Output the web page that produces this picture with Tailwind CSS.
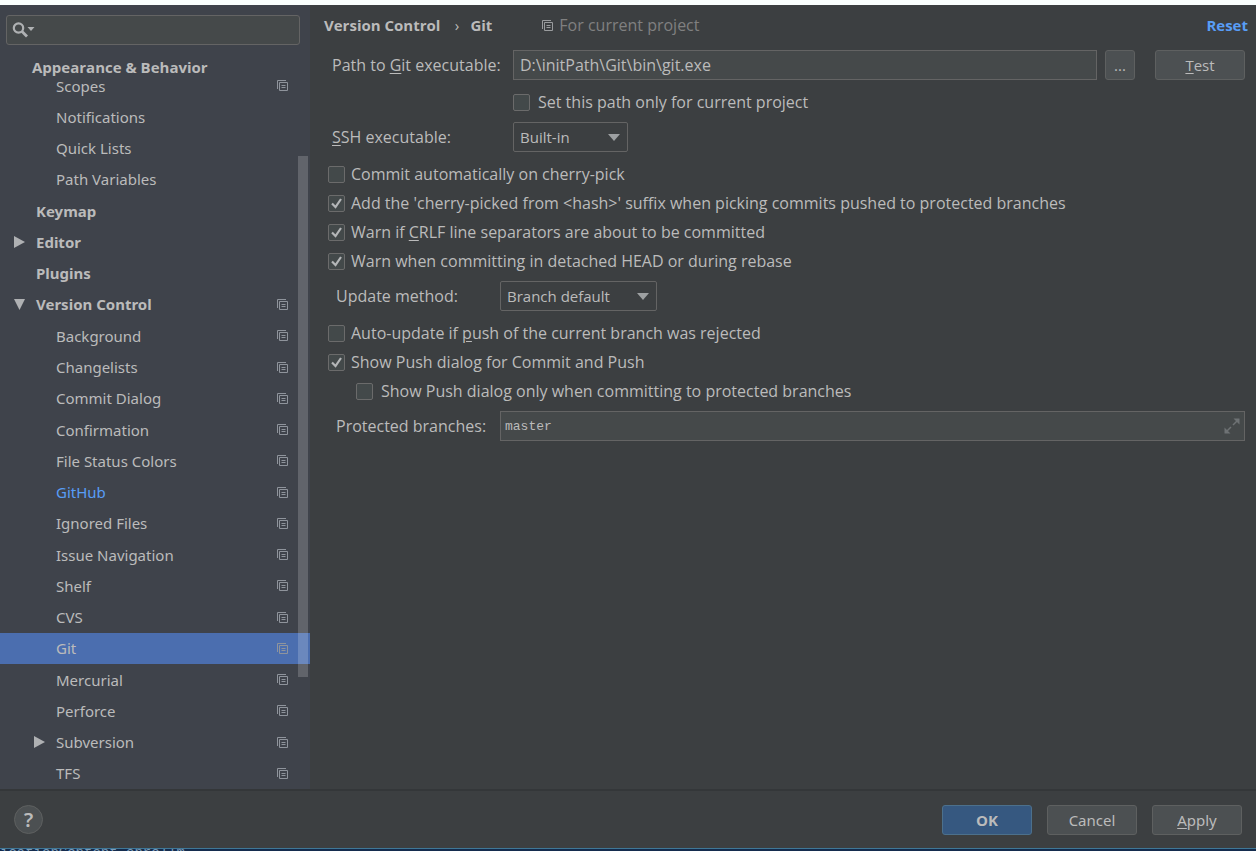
<!DOCTYPE html>
<html lang="en">
<head>
<meta charset="utf-8">
<meta name="viewport" content="width=device-width, initial-scale=1">
<title>Settings - Git</title>
<script src="https://cdn.jsdelivr.net/npm/@tailwindcss/browser@4"></script>
</head>
<body class="bg-[#3c3f41] font-['Noto_Sans','Open_Sans',sans-serif] text-[15px] leading-5 text-[#bbbbbb]">
<svg class="hidden">
  <symbol id="copy" viewBox="0 0 11 11"><path d="M.5 9V.5H9M2.500 2.500H10.500V10.500H2.500ZM4.500 5.500H8.500M4.500 7.500H8.500" fill="none" stroke="currentColor"/></symbol>
  <symbol id="right" viewBox="0 0 11 12"><path d="M0 0L11 6L0 12Z" fill="currentColor"/></symbol>
  <symbol id="down" viewBox="0 0 12 11"><path d="M0 0H11L5.500 11Z" fill="currentColor"/></symbol>
</svg>
<div class="flex min-h-screen flex-col border-t-[5px] border-[#fafffe]">
  <div class="flex flex-1">
    <aside class="relative flex w-[310px] shrink-0 flex-col bg-[#3f434b]">
      <label class="mx-[6px] mr-[10px] mt-[10px] flex h-[30px] items-center rounded-[3px] border border-[#646464] bg-[#45494a] pl-[5px]">
        <svg class="h-4 w-[24px] shrink-0" viewBox="0 0 24 16"><circle cx="6.500" cy="6" r="4.700" fill="none" stroke="#afb1b3" stroke-width="2.200"/><path d="M9.800 9.300L15 14.500" stroke="#afb1b3" stroke-width="2.800"/><path d="M15.500 5H22.500L19 9Z" fill="#afb1b3"/></svg>
        <input type="search" aria-label="Search settings" class="min-w-0 flex-1 bg-transparent outline-none">
      </label>
      <h2 class="mt-3 pl-8 font-['Open_Sans',sans-serif] font-bold">Appearance &amp; Behavior</h2>
      <nav id="tree" class="-mt-[7px] flex flex-1 flex-col" aria-label="Settings"></nav>
      <div class="absolute right-[2px] top-[151px] h-[521px] w-[10px] bg-white/18"></div>
    </aside>
    <main class="min-w-0 flex-1 pb-4 font-['Open_Sans',sans-serif] text-[16px]">
      <header class="flex h-10 items-center pl-[14px] pr-2">
        <h1 class="flex text-[15px] font-bold"><span>Version Control</span><span class="w-[30px] pl-[3px] text-center font-normal">›</span><span>Git</span></h1>
        <svg class="ml-[50px] mr-[6px] h-[11px] w-[11px] text-[#9a9c9e]"><use href="#copy"/></svg>
        <span class="text-[#808080]">For current project</span>
        <a href="#" class="ml-auto text-[15px] font-bold text-[#589df6]">Reset</a>
      </header>
      <div class="mt-[5px] flex h-[30px] items-center pl-[22px] pr-[11px]">
        <label for="path" class="w-[181px] shrink-0">Path to <u class="underline-offset-2">G</u>it executable:</label>
        <input id="path" value="D:\initPath\Git\bin\git.exe" class="h-[30px] min-w-0 flex-1 border border-[#646464] bg-[#45494a] px-[6px] outline-none">
        <button class="ml-2 h-[30px] w-[30px] rounded-[3px] border border-[#5e6060] bg-[#4c5052] text-[15px]">...</button>
        <button class="ml-5 h-[30px] w-[90px] rounded-[3px] border border-[#5e6060] bg-[#4c5052] text-[15px]"><u class="underline-offset-2">T</u>est</button>
      </div>
      <label class="mt-3 flex h-5 items-center gap-2 pl-[203px]"><input type="checkbox" class="box">Set this path only for current project</label>
      <div class="mt-[10px] flex items-center pl-[22px]">
        <label for="ssh" class="w-[181px]"><u class="underline-offset-2">S</u>SH executable:</label>
        <span class="relative w-[115px]"><select id="ssh" class="h-[30px] w-full appearance-none rounded-[2px] border border-[#646464] bg-[#3c3f41] px-[6px] text-[15px]"><option>Built-in</option></select><svg class="pointer-events-none absolute right-2 top-3 h-[7px] w-[12px]" viewBox="0 0 12 7"><path d="M0 0H12L6 7Z" fill="#9da0a2"/></svg></span>
      </div>
      <div class="mt-3 flex flex-col gap-[9px] pl-[18px]">
        <label class="flex h-5 items-center gap-[6px]"><input type="checkbox" class="box">Commit automatically on cherry-pick</label>
        <label class="flex h-5 items-center gap-[6px]"><input type="checkbox" checked class="box">Add the 'cherry-picked from &lt;hash&gt;' suffix when picking commits pushed to protected branches</label>
        <label class="flex h-5 items-center gap-[6px]"><input type="checkbox" checked class="box"><span>Warn if <u class="underline-offset-2">C</u>RLF line separators are about to be committed</span></label>
        <label class="flex h-5 items-center gap-[6px]"><input type="checkbox" checked class="box">Warn when committing in detached HEAD or during rebase</label>
      </div>
      <div class="mt-[10px] flex items-center pl-[26px]">
        <label for="update" class="w-[164px]">Update method:</label>
        <span class="relative w-[157px]"><select id="update" class="h-[30px] w-full appearance-none rounded-[2px] border border-[#646464] bg-[#3c3f41] px-[6px] text-[15px]"><option>Branch default</option></select><svg class="pointer-events-none absolute right-2 top-3 h-[7px] w-[12px]" viewBox="0 0 12 7"><path d="M0 0H12L6 7Z" fill="#9da0a2"/></svg></span>
      </div>
      <div class="mt-3 flex flex-col gap-[9px] pl-[18px]">
        <label class="flex h-5 items-center gap-[6px]"><input type="checkbox" class="box"><span>Auto-update if <u class="underline-offset-2">p</u>ush of the current branch was rejected</span></label>
        <label class="flex h-5 items-center gap-[6px]"><input type="checkbox" checked class="box">Show Push dialog for Commit and Push</label>
        <label class="ml-7 flex h-5 items-center gap-2"><input type="checkbox" class="box">Show Push dialog only when committing to protected branches</label>
      </div>
      <div class="mt-[10px] flex items-center pl-[26px] pr-[11px]">
        <label for="branches" class="w-[164px] shrink-0">Protected branches:</label>
        <span class="relative min-w-0 flex-1"><input id="branches" value="master" class="block h-[30px] w-full border border-[#646464] bg-[#45494a] px-1 font-['Liberation_Mono',monospace] text-[13px] outline-none"><svg class="absolute right-[5px] top-[7px] h-4 w-4" viewBox="0 0 16 16"><path d="M9.500 .5H15.500V6.500ZM.5 9.500V15.500H6.500Z" fill="#6e7274"/><path d="M9 7L13 3M3 13L7 9" stroke="#6e7274" stroke-width="1.500"/></svg></span>
      </div>
    </main>
  </div>
  <footer class="flex h-[59px] items-center gap-[15px] border-t-2 border-[#343739] pl-[14px] pr-[14px]">
    <button aria-label="Help" class="mr-auto h-[29px] w-[29px] rounded-full border border-[#5e6060] bg-[#4c5052] text-[20px] font-semibold">?</button>
    <button class="h-[30px] w-[90px] rounded-[3px] border border-[#4c708c] bg-[#365880] font-['Open_Sans',sans-serif] font-bold">OK</button>
    <button class="h-[30px] w-[90px] rounded-[3px] border border-[#5e6060] bg-[#4c5052]">Cancel</button>
    <button class="h-[30px] w-[90px] rounded-[3px] border border-[#5e6060] bg-[#4c5052]"><u class="underline-offset-2">A</u>pply</button>
  </footer>
  <div class="h-[3px] overflow-hidden border-t border-[#3f7796] bg-[#142c4e]"><p class="-mt-1 font-['Liberation_Mono',monospace] text-[14px] leading-4 text-[#7d9dba]">icationContent enrollm</p></div>
</div>
<script>
// Each entry: label, has the per-project mark, kind ('top', 'open', 'closed', 'sub' or 'subclosed')
const items = [
  ['Scopes', 1, 'sub'], ['Notifications', 0, 'sub'], ['Quick Lists', 0, 'sub'], ['Path Variables', 0, 'sub'],
  ['Keymap', 0, 'top'], ['Editor', 0, 'closed'], ['Plugins', 0, 'top'], ['Version Control', 1, 'open'],
  ['Background', 1, 'sub'], ['Changelists', 1, 'sub'], ['Commit Dialog', 1, 'sub'], ['Confirmation', 1, 'sub'],
  ['File Status Colors', 1, 'sub'], ['GitHub', 1, 'sub'], ['Ignored Files', 1, 'sub'], ['Issue Navigation', 1, 'sub'],
  ['Shelf', 1, 'sub'], ['CVS', 1, 'sub'], ['Git', 1, 'sub'], ['Mercurial', 1, 'sub'], ['Perforce', 1, 'sub'],
  ['Subversion', 1, 'subclosed'], ['TFS', 1, 'sub']
];
document.getElementById('tree').innerHTML = items.map(([name, mark, kind]) => {
  const sub = kind.startsWith('sub');
  const arrow = kind === 'open' ? '<svg class="h-[11px] w-[12px]"><use href="#down"/></svg>'
    : kind.endsWith('closed') ? '<svg class="h-[12px] w-[11px]"><use href="#right"/></svg>' : '';
  const tone = name === 'Git' ? 'bg-[#4b6eaf]' : name === 'GitHub' ? 'text-[#589df6]' : '';
  return `<a href="#" class="flex flex-1 items-center pr-[22px] ${sub ? 'pl-[34px]' : 'pl-[14px] font-bold'} ${tone}">
    <span class="w-[22px] shrink-0 text-[#afb1b3]">${arrow}</span><span class="flex-1">${name}</span>
    ${mark ? '<svg class="h-[11px] w-[11px] text-[#8f949c]"><use href="#copy"/></svg>' : ''}</a>`;
}).join('');
// Tick boxes share one look
document.querySelectorAll('.box').forEach(b => {
  b.className = 'relative h-[17px] w-[17px] shrink-0 appearance-none rounded-[2px] border border-[#6b6b6b] bg-[#43494a]';
  if (!b.checked) return;
  const s = document.createElement('span');
  s.className = 'relative flex h-[17px] w-[17px] shrink-0';
  b.replaceWith(s);
  s.append(b);
  s.insertAdjacentHTML('beforeend', '<svg class="pointer-events-none absolute inset-0" viewBox="0 0 17 17"><path d="M4 8.500L7.500 12L13 4" fill="none" stroke="#b4b6b8" stroke-width="2.200"/></svg>');
});
</script>
</body>
</html>
